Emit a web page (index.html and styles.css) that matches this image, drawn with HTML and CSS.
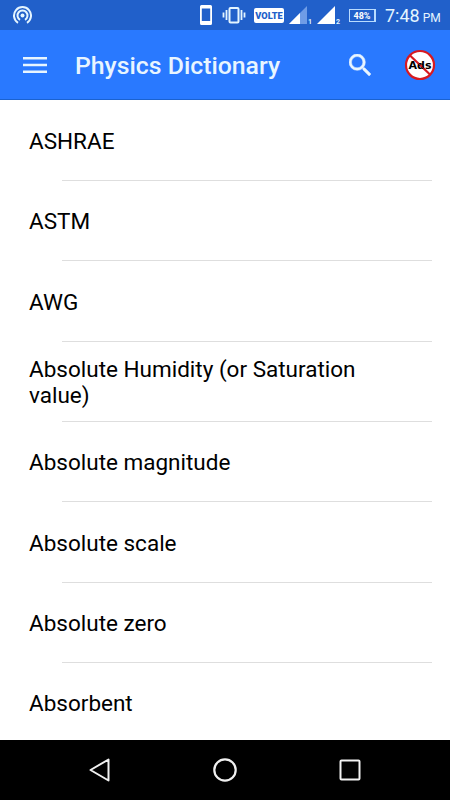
FILE: index.html
```html
<!DOCTYPE html>
<html lang="en">
<head>
    <meta charset="UTF-8">
    <meta name="viewport" content="width=device-width, initial-scale=1.0">
    <title>Physics Dictionary</title>
    <link rel="stylesheet" href="styles.css">
</head>
<body>
    <div class="status-bar">
        <svg class="hotspot" width="20" height="20" viewBox="0 0 20 20" fill="none" stroke="#e4f5ff" stroke-width="2">
            <circle cx="10.500" cy="10.500" r="2" fill="#e4f5ff" stroke="none"/>
            <path d="M8 14.800A5 5 0 1 1 13 14.800"/>
            <path d="M6 17.800A8.500 8.500 0 1 1 15 17.800"/>
        </svg>
        <svg class="phone" width="12" height="20" viewBox="0 0 12 20">
            <path fill="#fff" fill-rule="evenodd" d="M1.500 0h9Q12 0 12 1.500v17Q12 20 10.500 20h-9Q0 20 0 18.500v-17Q0 0 1.500 0zM1.800 3.500v12.500h8.400V3.500z"/>
        </svg>
        <svg class="vibrate" width="24" height="18" viewBox="0 0 24 18" fill="none" stroke="#e4f5ff" stroke-width="2">
            <rect x="7.500" y="2" width="9" height="14.500" rx="1"/>
            <path d="M4.500 4v10M1.500 6.500v5M19.500 4v10M22.500 6.500v5" stroke-width="1.800"/>
        </svg>
        <span class="volte">VOLTE</span>
        <svg class="signal" width="24" height="20" viewBox="0 0 24 20">
            <path fill="#6f9ce6" d="M18 0v18H0z"/>
            <path fill="#fff" d="M11 7v11H0z"/>
            <text x="19" y="18">1</text>
        </svg>
        <svg class="signal second" width="24" height="20" viewBox="0 0 24 20">
            <path fill="#fff" d="M18 0v18H0z"/>
            <text x="19" y="18">2</text>
        </svg>
        <span class="battery">48%</span>
        <div class="time"><span>7:48</span><small>PM</small></div>
    </div>

    <div class="app-bar">
        <svg class="menu-icon" width="24" height="18" viewBox="0 0 24 18">
            <path fill="#e8f5ff" d="M0 1h24v2.500H0zM0 7.700h24v2.500H0zM0 14.500h24v2.500H0z"/>
        </svg>
        <h1>Physics Dictionary</h1>
        <svg class="search-icon" width="22" height="22" viewBox="3 3 17.500 17.500">
            <path fill="#e8f5ff" stroke="#e8f5ff" stroke-width=".4" d="M15.500 14h-.79l-.28-.27A6.471 6.471 0 0 0 16 9.500 6.500 6.500 0 1 0 9.500 16c1.610 0 3.090-.59 4.230-1.570l.27.28v.79l5 4.990L20.490 19l-4.990-5zm-6 0C7.010 14 5 11.990 5 9.500S7.010 5 9.500 5 14 7.010 14 9.500 11.990 14 9.500 14z"/>
        </svg>
        <svg class="no-ads" width="32" height="32" viewBox="0 0 32 32">
            <circle cx="16" cy="16" r="14" fill="#fff" stroke="#d71920" stroke-width="2.200"/>
            <path d="M6 6.500L26 25.500" stroke="#d71920" stroke-width="2.200"/>
            <text x="16" y="20" text-anchor="middle" textLength="23" lengthAdjust="spacingAndGlyphs">Ads</text>
            <path d="M6 6.500L26 25.500" stroke="#d71920" stroke-width=".8"/>
        </svg>
    </div>

    <ul class="word-list">
        <li>ASHRAE</li>
        <li>ASTM</li>
        <li>AWG</li>
        <li>Absolute Humidity (or Saturation value)</li>
        <li>Absolute magnitude</li>
        <li>Absolute scale</li>
        <li>Absolute zero</li>
        <li>Absorbent</li>
    </ul>

    <div class="nav-bar">
        <svg width="24" height="24" viewBox="0 0 24 24" fill="none" stroke="#f0f0f0" stroke-width="2" stroke-linejoin="round">
            <path d="M20.500 1.500v21L2.500 12z"/>
        </svg>
        <svg width="24" height="24" viewBox="0 0 24 24" fill="none" stroke="#f0f0f0" stroke-width="2.200">
            <circle cx="12" cy="12" r="10.700"/>
        </svg>
        <svg width="24" height="24" viewBox="0 0 24 24" fill="none" stroke="#f0f0f0" stroke-width="2">
            <rect x="2.500" y="2.500" width="19" height="19" rx="1"/>
        </svg>
    </div>
</body>
</html>
```

FILE: styles.css
```css
* {
    box-sizing: border-box;
}
body {
    margin: 0;
    height: 800px;
    display: flex;
    flex-direction: column;
    overflow: hidden;
    background-color: #fff;
    font-family: Roboto, sans-serif;
    color: #000;
}
svg {
    flex: none;
    display: block;
}

.status-bar {
    height: 30px;
    flex: none;
    display: flex;
    align-items: center;
    padding: 0 10px 0 12px;
    background-color: #2160ca;
    color: #fff;
}
.status-bar span {
    flex: none;
}
.phone {
    margin-left: 168px;
}
.vibrate {
    margin-left: 10px;
}
.volte {
    width: 30px;
    height: 15px;
    margin-left: 8px;
    border-radius: 2px;
    background-color: #fff;
    color: #2160ca;
    font-size: 9.2px;
    font-weight: 900;
    line-height: 16px;
    text-align: center;
}
.signal {
    margin: 2px 0 0 5px;
}
.signal.second {
    margin-left: 4px;
}
.signal text {
    fill: #e4f5ff;
    font-size: 7px;
    font-weight: bold;
}
.battery {
    width: 27px;
    height: 13px;
    margin-left: 8px;
    border: 1px solid #b9dcff;
    border-right-width: 2px;
    font-size: 9px;
    font-weight: bold;
    line-height: 12px;
    text-align: center;
}
.time {
    display: flex;
    align-items: baseline;
    gap: 3px;
    margin: 2px 0 0 9px;
    font-size: 18px;
    line-height: 22px;
    color: #e4f5ff;
}
.time small {
    font-size: 12px;
    line-height: 14px;
}

.app-bar {
    height: 70px;
    flex: none;
    display: flex;
    align-items: center;
    padding: 0 14px 0 23px;
    background-color: #2979ff;
    border-bottom: 1px solid #1b62cf;
}
.app-bar h1 {
    width: 245px;
    margin: 2px 0 0 28px;
    font-size: 24.8px;
    font-weight: 500;
    line-height: 30px;
    white-space: nowrap;
    color: #e8f5ff;
}
.search-icon {
    margin-left: 29px;
}
.no-ads {
    margin-left: auto;
}
.no-ads text {
    font-family: "DejaVu Sans", sans-serif;
    font-size: 11px;
    font-weight: bold;
}

.word-list {
    flex: 1;
    min-height: 0;
    overflow: hidden;
    margin: 0;
    padding: 0.7px 0 0;
    list-style: none;
}
.word-list li {
    height: 80.33px;
    display: flex;
    align-items: center;
    padding: 0.6px 60px 0 29px;
    font-size: 22.5px;
    line-height: 26px;
    background: linear-gradient(#dedede, #dedede) 62px 100% / 370px 1px no-repeat;
}

.nav-bar {
    height: 60px;
    flex: none;
    display: flex;
    justify-content: center;
    align-items: center;
    gap: 101px;
    background-color: #000;
}
```
